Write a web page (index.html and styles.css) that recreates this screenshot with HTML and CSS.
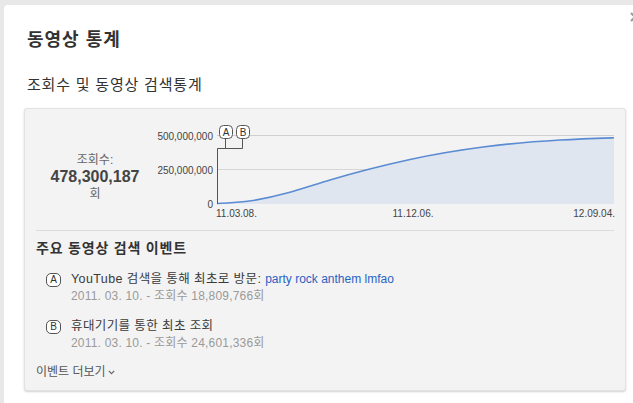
FILE: index.html
```html
<!DOCTYPE html>
<html lang="ko">
<head>
<meta charset="utf-8">
<title>동영상 통계</title>
<link rel="stylesheet" href="styles.css">
</head>
<body>
<div class="dialog">
  <svg class="close" width="10" height="10" viewBox="0 0 10 10"><path d="M1 1L9 9M9 1L1 9" stroke="#999" stroke-width="2"/></svg>
  <h1 class="title">동영상 통계</h1>
  <h2 class="subtitle">조회수 및 동영상 검색통계</h2>
  <div class="card">
    <div class="chart-row">
      <div class="stats">
        <div class="stats-label">조회수:</div>
        <div class="stats-value">478,300,187</div>
        <div class="stats-unit">회</div>
      </div>
      <svg class="chart" width="470" height="121" viewBox="155 109 470 121">
        <line x1="217" y1="135.5" x2="614" y2="135.5" stroke="#cfcfcf" stroke-width="1"/>
        <line x1="217" y1="169.5" x2="614" y2="169.5" stroke="#d6d6d6" stroke-width="1"/>
        <path class="area" d="M217,203.5 C230,203 243,202 253,200.5 C265,198.5 276,196 287,193 C300,189.5 315,184.5 330,180 C355,172.5 385,165 410,159.5 C435,154 460,150 483,147 C510,143.5 535,141.5 560,140 C580,139 600,138.3 614,137.8 L614,204 L217,204 Z" fill="#dfe6ef"/>
        <path d="M217,203.5 C230,203 243,202 253,200.5 C265,198.5 276,196 287,193 C300,189.5 315,184.5 330,180 C355,172.5 385,165 410,159.5 C435,154 460,150 483,147 C510,143.5 535,141.5 560,140 C580,139 600,138.3 614,137.8" fill="none" stroke="#5b8bd2" stroke-width="1.6"/>
        <path d="M217.5,204 V148.5 H242.5 M225.5,148.5 V139 M242.5,148.5 V139" fill="none" stroke="#555" stroke-width="1"/>
        <rect x="219.5" y="125.5" width="13" height="13" rx="4" fill="#fff" stroke="#555"/>
        <rect x="236.5" y="125.5" width="13" height="13" rx="4" fill="#fff" stroke="#555"/>
        <text x="226" y="136" class="mk">A</text>
        <text x="243" y="136" class="mk">B</text>
        <text x="213" y="140" class="ylab">500,000,000</text>
        <text x="213" y="173.5" class="ylab">250,000,000</text>
        <text x="213" y="207.5" class="ylab">0</text>
        <text x="216" y="216.5" class="xlab">11.03.08.</text>
        <text x="413" y="216.5" class="xlab mid">11.12.06.</text>
        <text x="615" y="216.5" class="xlab end">12.09.04.</text>
      </svg>
    </div>
    <div class="events">
      <h3 class="events-title">주요 동영상 검색 이벤트</h3>
      <ul class="event-list">
        <li class="event">
          <span class="badge">A</span>
          <div class="event-body">
            <div class="event-main">YouTube 검색을 통해 최초로 방문: <a class="event-link" href="#">party rock anthem lmfao</a></div>
            <div class="event-meta">2011. 03. 10. - 조회수 18,809,766회</div>
          </div>
        </li>
        <li class="event">
          <span class="badge">B</span>
          <div class="event-body">
            <div class="event-main">휴대기기를 통한 최초 조회</div>
            <div class="event-meta">2011. 03. 10. - 조회수 24,601,336회</div>
          </div>
        </li>
      </ul>
      <div class="more">이벤트 더보기 <svg class="chev" width="7" height="5" viewBox="0 0 7 5"><path d="M0.8 0.8L3.5 3.6L6.2 0.8" fill="none" stroke="#666" stroke-width="1.2"/></svg></div>
    </div>
  </div>
</div>
</body>
</html>
```

FILE: styles.css
```css
html, body {
  margin: 0;
  padding: 0;
}
body {
  background: #e8e8e8;
  overflow: hidden;
  width: 633px;
  height: 403px;
  font-family: "Liberation Sans", "Noto Sans CJK KR", sans-serif;
  color: #333;
}
.dialog {
  position: relative;
  margin: 5px 0 0 4px;
  background: #fff;
  border-radius: 4px 0 0 0;
  height: 398px;
  padding: 0 0 0 20px;
  box-sizing: border-box;
}
.close {
  position: absolute;
  left: 626px;
  top: 7px;
}
.title {
  margin: 0;
  padding: 25px 0 0 3px;
  font-size: 18px;
  line-height: 20px;
  font-weight: bold;
  letter-spacing: 1px;
  color: #333;
}
.subtitle {
  margin: 25px 0 0 0;
  padding-left: 3px;
  font-size: 15px;
  line-height: 20px;
  font-weight: normal;
  letter-spacing: 0.8px;
  color: #333;
}
.card {
  margin-top: 13px;
  width: 602px;
  height: 283px;
  box-sizing: border-box;
  background: #f3f3f3;
  border: 1px solid #e2e2e2;
  border-radius: 3px;
  box-shadow: 0 1px 2px rgba(0, 0, 0, 0.18);
}
.chart-row {
  display: flex;
  height: 121px;
}
.stats {
  width: 130px;
  display: flex;
  flex-direction: column;
  align-items: center;
  padding: 43px 0 0 10px;
  box-sizing: border-box;
  color: #666;
}
.stats-label {
  font-size: 12px;
  line-height: 16px;
}
.stats-value {
  font-size: 16px;
  line-height: 18px;
  font-weight: bold;
  color: #444;
}
.stats-unit {
  font-size: 12px;
  line-height: 16px;
}
.chart {
  display: block;
}
.chart text {
  font-family: "Liberation Sans", sans-serif;
  font-size: 10px;
  fill: #444;
}
.chart .ylab {
  text-anchor: end;
}
.chart .mid {
  text-anchor: middle;
}
.chart .end {
  text-anchor: end;
}
.chart .mk {
  text-anchor: middle;
  font-size: 10px;
  fill: #333;
}
.events {
  margin: 0 11px;
  border-top: 1px solid #dcdcdc;
  padding-top: 8px;
}
.events-title {
  margin: 0;
  font-size: 14px;
  line-height: 18px;
  font-weight: bold;
  letter-spacing: 0.8px;
  color: #333;
}
.event-list {
  list-style: none;
  margin: 13px 0 0 0;
  padding: 0 0 0 10px;
  display: flex;
  flex-direction: column;
  gap: 12px;
}
.event {
  display: flex;
  align-items: flex-start;
}
.badge {
  width: 13px;
  height: 12px;
  margin-top: 3px;
  margin-right: 10px;
  border: 1px solid #555;
  border-radius: 5px;
  background: #fff;
  font-size: 10px;
  line-height: 12px;
  text-align: center;
  color: #333;
  flex: none;
}
.event-main {
  font-size: 12.5px;
  line-height: 18px;
  letter-spacing: 0.4px;
  color: #3a3a3a;
}
.event-link {
  color: #2a62c2;
  text-decoration: none;
  font-size: 12px;
  letter-spacing: 0;
}
.event-meta {
  font-size: 12px;
  line-height: 17px;
  letter-spacing: 0.2px;
  color: #9a9a9a;
}
.more {
  margin-top: 12px;
  font-size: 12px;
  line-height: 16px;
  color: #555;
  display: flex;
  align-items: center;
  gap: 2px;
}
.chev {
  display: block;
}
```
